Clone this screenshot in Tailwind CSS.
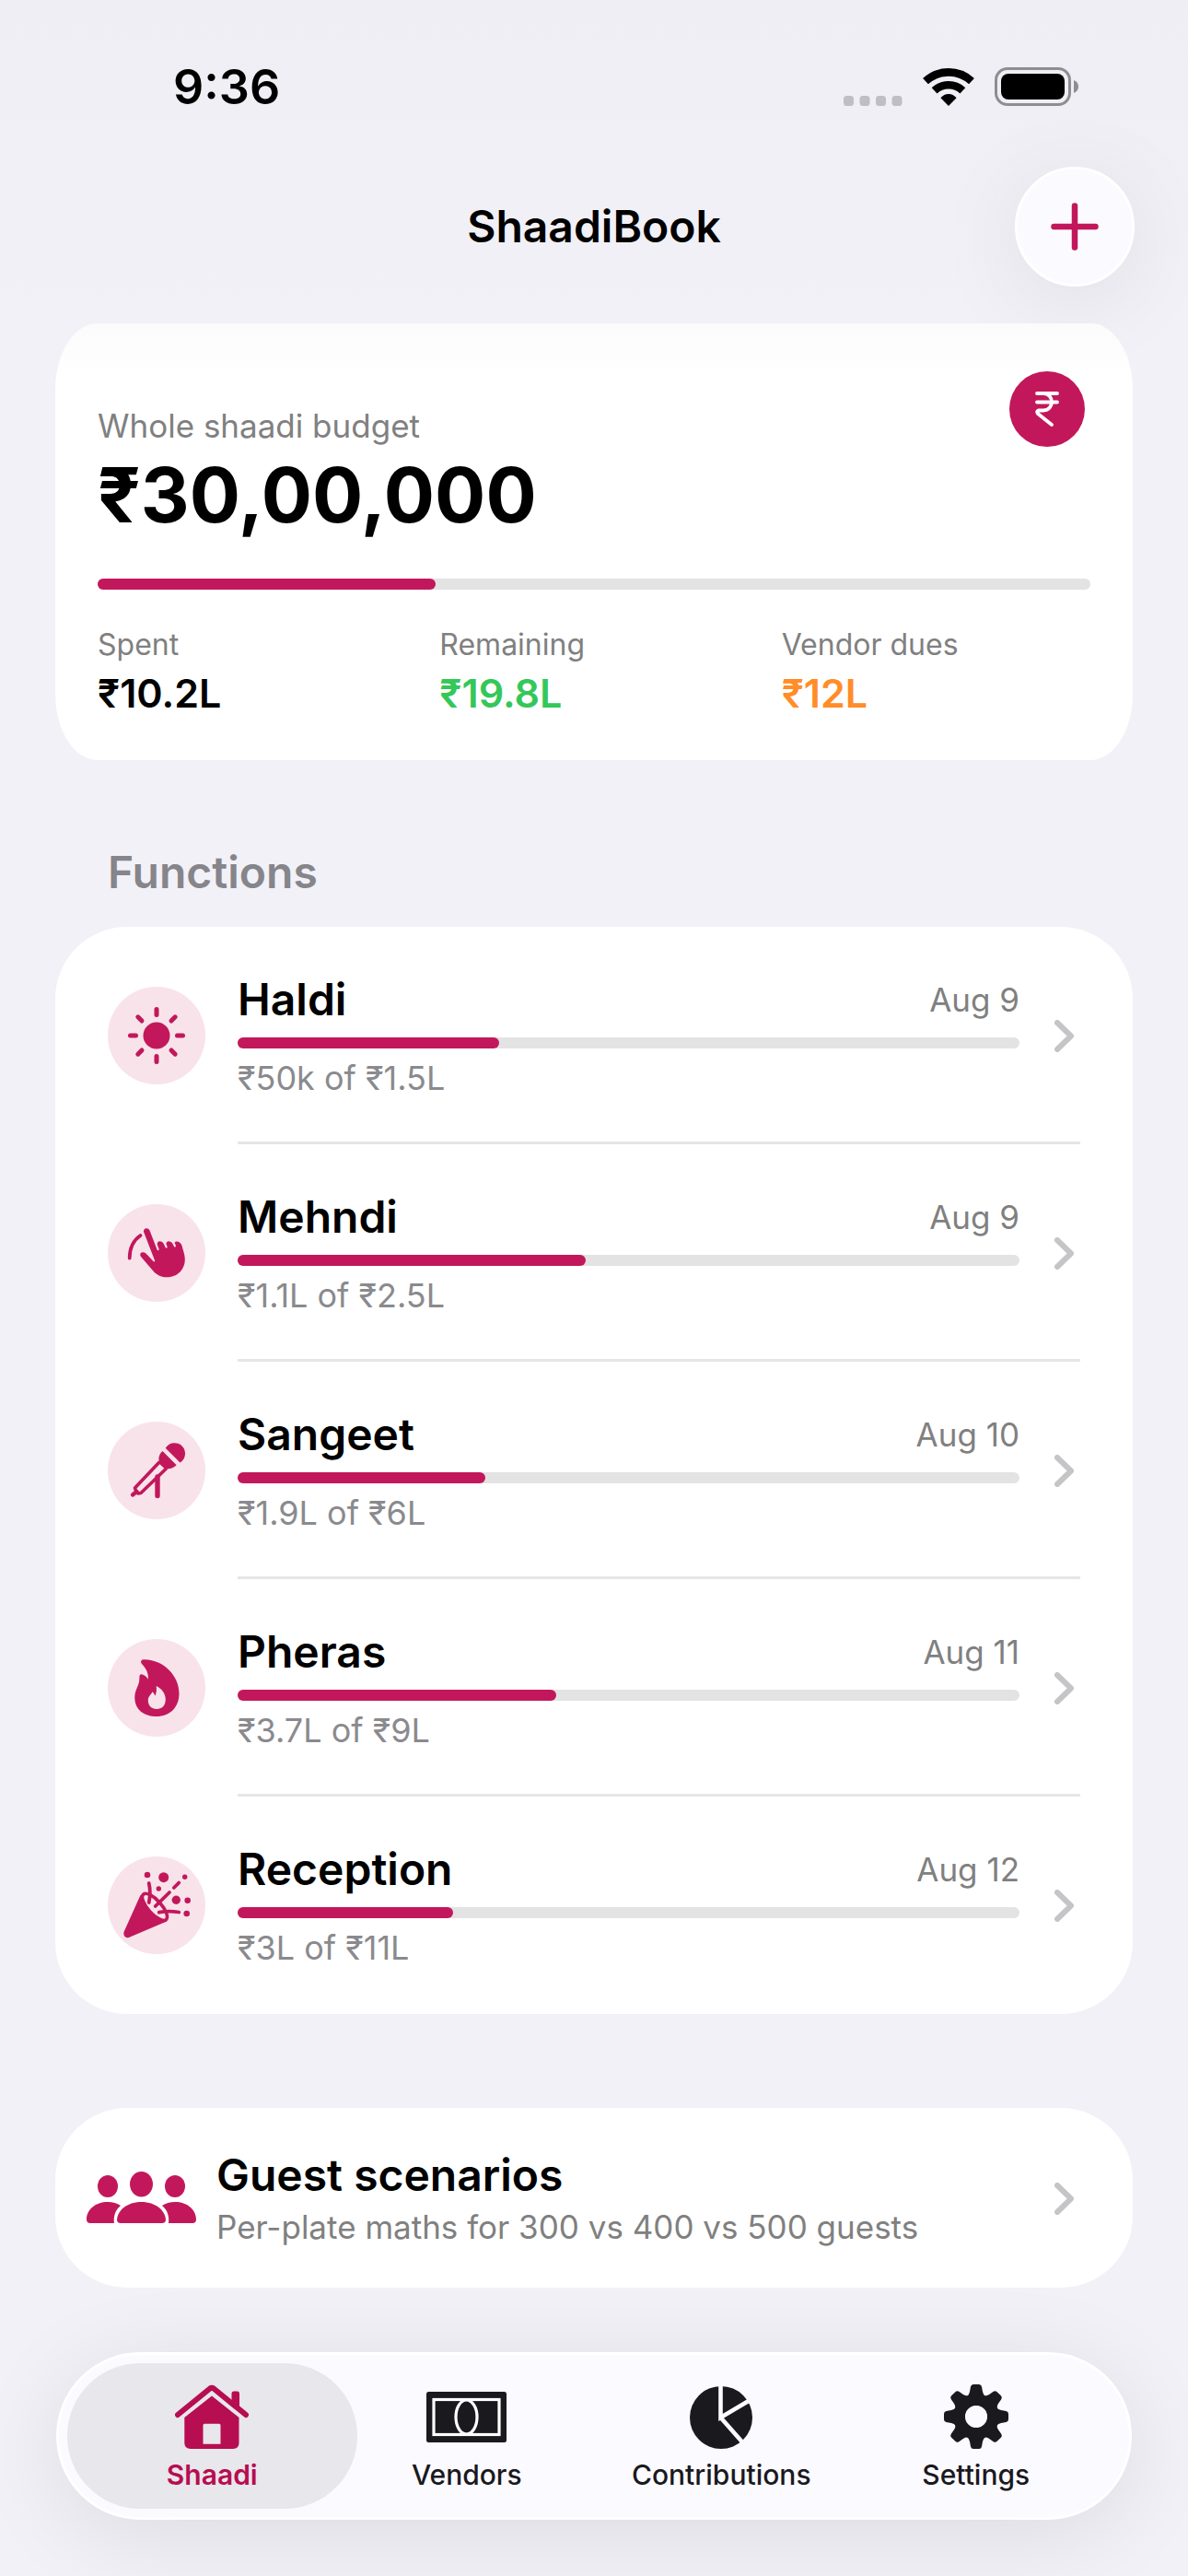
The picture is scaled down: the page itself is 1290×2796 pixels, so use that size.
<!DOCTYPE html>
<html lang="en">
<head>
    <meta charset="UTF-8">
    <meta name="viewport" content="width=device-width, initial-scale=1.0">
    <title>ShaadiBook</title>
    <script src="https://cdn.jsdelivr.net/npm/@tailwindcss/browser@4"></script>
</head>
<body class="bg-[#f2f1f7] font-['Inter','Noto_Sans',sans-serif] text-black">
    <div class="min-h-screen flex flex-col bg-linear-to-b from-[#efeef4] to-[#f2f1f7] to-[360px]">

        <!-- Status bar -->
        <div class="h-[126px] pt-16 pl-[188px] pr-[119px] flex items-center justify-between">
            <span class="text-[52px] leading-[60px] font-semibold">9:36</span>
            <div class="flex items-end gap-[22px] pb-[2px]">
                <svg width="64" height="11" viewBox="0 0 64 11" fill="#bfbec4" aria-hidden="true">
                    <rect width="11" height="11" rx="3.5"/>
                    <rect x="17.5" width="11" height="11" rx="3.5"/>
                    <rect x="35" width="11" height="11" rx="3.5"/>
                    <rect x="52.5" width="11" height="11" rx="3.5"/>
                </svg>
                <svg width="56" height="41" viewBox="0 0 56 41" fill="none" stroke="#000" stroke-width="8.6" aria-hidden="true">
                    <path d="M3 14.2A36.7 36.7 0 0 1 53 14.2"/>
                    <path d="M12.6 24.3A22.7 22.7 0 0 1 43.4 24.3"/>
                    <path d="M28 41L19.4 32.3Q23 28 28 28T36.6 32.3Z" fill="#000" stroke="none"/>
                </svg>
                <svg width="91" height="42" viewBox="0 0 91 42" aria-hidden="true">
                    <rect x="1.5" y="1.5" width="80" height="39" rx="12.5" fill="none" stroke="#8e8e92" stroke-width="3"/>
                    <rect x="7" y="7" width="69" height="28" rx="8" fill="#000"/>
                    <path d="M86 14Q91 16 91 21T86 28Z" fill="#8e8e92"/>
                </svg>
            </div>
        </div>

        <!-- Title bar -->
        <header class="mt-[55px] px-[58px] grid grid-cols-[1fr_auto_1fr] items-center">
            <h1 class="col-start-2 text-[48px] leading-[60px] font-semibold">ShaadiBook</h1>
            <button type="button" aria-label="Add function" class="justify-self-end size-[130px] rounded-full bg-[#fbfaff] border-3 border-white flex items-center justify-center shadow-[0_16px_100px_rgba(0,0,0,0.08)]">
                <svg width="52" height="52" viewBox="0 0 52 52" stroke="#c2185b" stroke-width="6.5" stroke-linecap="round">
                    <path d="M26 3.5V48.5M3.5 26H48.5"/>
                </svg>
            </button>
        </header>

        <main class="px-[60px] pt-10">
            <!-- Budget summary -->
            <section class="rounded-[46px/72px] bg-linear-to-b from-[#fbfbfb] to-white to-[60px] px-[46px] pt-[52px] pb-[45px]">
                <div class="flex justify-between items-start">
                    <div class="pt-[35px]">
                        <p class="text-[35px] leading-[48px] text-[#808080]">Whole shaadi budget</p>
                        <p class="mt-1 text-[82px] leading-[96px] font-bold">₹30,00,000</p>
                    </div>
                    <div class="mr-[6px] size-[82px] rounded-full bg-[#c2185b] flex items-center justify-center">
                        <svg width="26" height="38" viewBox="0 0 26 38" fill="none" stroke="#fff" stroke-width="3.8" stroke-linecap="round" stroke-linejoin="round" aria-hidden="true">
                            <path d="M2 2H24M2 11.5H24M2 2H9C21 2 21 20.5 9 20.5H3.5Q1 21.5 3 24L18 36"/>
                        </svg>
                    </div>
                </div>
                <div class="mt-[42px] h-3 rounded-full bg-[#e3e3e3]" role="progressbar" aria-label="Budget spent" aria-valuenow="34" aria-valuemin="0" aria-valuemax="100">
                    <div class="h-3 rounded-full bg-[#c2185b]" style="width: 34%"></div>
                </div>
                <dl class="mt-10 grid grid-cols-3 gap-9">
                    <div>
                        <dt class="text-[32px] leading-10 text-[#808080]">Spent</dt>
                        <dd class="mt-1 text-[43px] leading-[56px] font-semibold">₹10.2L</dd>
                    </div>
                    <div>
                        <dt class="text-[32px] leading-10 text-[#808080]">Remaining</dt>
                        <dd class="mt-1 text-[43px] leading-[56px] font-semibold text-[#34c759]">₹19.8L</dd>
                    </div>
                    <div>
                        <dt class="text-[32px] leading-10 text-[#808080]">Vendor dues</dt>
                        <dd class="mt-1 text-[43px] leading-[56px] font-semibold text-[#ff8d28]">₹12L</dd>
                    </div>
                </dl>
            </section>

            <!-- Functions -->
            <h2 class="mt-[92px] mb-[29px] pl-[57px] text-[48px] leading-[60px] font-semibold text-[#85858b]">Functions</h2>
            <ul class="rounded-[78px] bg-white">
                <li>
                    <a href="#haldi" class="flex items-center gap-[35px] px-[57px]">
                        <svg class="shrink-0" width="106" height="106" viewBox="0 0 106 106" aria-hidden="true">
                            <circle cx="53" cy="53" r="53" fill="#f8e3eb"/>
                            <circle cx="53" cy="53" r="14.5" fill="#c2185b"/>
                            <g stroke="#c2185b" stroke-width="5" stroke-linecap="round">
                                <path d="M53 24.5V30.5M53 75.5V81.5M24.5 53H30.5M75.5 53H81.5"/>
                                <path d="M32.8 32.8L37 37M69 69L73.2 73.2M73.2 32.8L69 37M37 69L32.8 73.2"/>
                            </g>
                        </svg>
                        <div class="flex-1 flex items-center gap-[38px] pt-[49px] pb-[45px] pr-[7px] border-b-3 border-[#e6e6e6]">
                            <div class="flex-1">
                                <div class="flex items-center justify-between">
                                    <h3 class="text-[48px] leading-[60px] font-semibold">Haldi</h3>
                                    <span class="text-[35px] leading-[48px] text-[#808080]">Aug 9</span>
                                </div>
                                <div class="mt-[11px] h-3 rounded-full bg-[#e3e3e3]">
                                    <div class="h-3 rounded-full bg-[#c2185b]" style="width: 33.4%"></div>
                                </div>
                                <p class="mt-2 text-[36px] leading-[48px] text-[#8a8a8e]">₹50k of ₹1.5L</p>
                            </div>
                            <svg class="shrink-0" width="21" height="35" viewBox="0 0 21 35" fill="none" stroke="#c5c5c7" stroke-width="6" stroke-linecap="round" stroke-linejoin="round" aria-hidden="true">
                                <path d="M3 3L18 17.5L3 32"/>
                            </svg>
                        </div>
                    </a>
                </li>
                <li>
                    <a href="#mehndi" class="flex items-center gap-[35px] px-[57px]">
                        <svg class="shrink-0" width="106" height="106" viewBox="0 0 106 106" aria-hidden="true">
                            <circle cx="53" cy="53" r="53" fill="#f8e3eb"/>
                            <path d="M23.7 58.5C23.7 48 27.5 39.5 35.5 34" fill="none" stroke="#c2185b" stroke-width="3.8" stroke-linecap="round"/>
                            <path fill="#c2185b" d="M39.2 30.6C38 26.5 43.5 24.3 45.6 28.8L53.6 49.5C54.3 51 56 50 55.5 48.5L53.8 44C53 40.5 57.5 38.5 60.5 42.5L62.6 47C63.5 48.5 65 47.5 64.6 46L63.4 43C63.5 39.8 68 38.8 70.5 43L72 46C73 47.3 74.3 46.3 73.8 44.5L72.6 42C74 39.3 79 40.5 80.5 45L83 54C84.5 60 84 66 80.5 71C77 76.5 71 79.3 64 79.3C57 79.3 52 76 48 71L36 57C33.5 53 38 50.5 41.5 53.5L49.5 62C50.5 63 51.5 62.3 51 61Z"/>
                        </svg>
                        <div class="flex-1 flex items-center gap-[38px] pt-[49px] pb-[45px] pr-[7px] border-b-3 border-[#e6e6e6]">
                            <div class="flex-1">
                                <div class="flex items-center justify-between">
                                    <h3 class="text-[48px] leading-[60px] font-semibold">Mehndi</h3>
                                    <span class="text-[35px] leading-[48px] text-[#808080]">Aug 9</span>
                                </div>
                                <div class="mt-[11px] h-3 rounded-full bg-[#e3e3e3]">
                                    <div class="h-3 rounded-full bg-[#c2185b]" style="width: 44.5%"></div>
                                </div>
                                <p class="mt-2 text-[36px] leading-[48px] text-[#8a8a8e]">₹1.1L of ₹2.5L</p>
                            </div>
                            <svg class="shrink-0" width="21" height="35" viewBox="0 0 21 35" fill="none" stroke="#c5c5c7" stroke-width="6" stroke-linecap="round" stroke-linejoin="round" aria-hidden="true">
                                <path d="M3 3L18 17.5L3 32"/>
                            </svg>
                        </div>
                    </a>
                </li>
                <li>
                    <a href="#sangeet" class="flex items-center gap-[35px] px-[57px]">
                        <svg class="shrink-0" width="106" height="106" viewBox="0 0 106 106" aria-hidden="true">
                            <circle cx="53" cy="53" r="53" fill="#f8e3eb"/>
                            <g fill="#c2185b">
                                <path d="M62.7 28.7A11.5 11.5 0 1 1 78.5 44.5Z"/>
                                <path d="M59.5 32L74.7 47.3C71 51 66 52 63.5 51L56 43.5C54.5 40 56 35 59.5 32Z"/>
                            </g>
                            <path d="M56.5 43.5L29.5 72L30.5 75L33 78L36 77.5L64 50.5" fill="none" stroke="#c2185b" stroke-width="3.6" stroke-linejoin="round"/>
                            <path d="M56.5 43.5L64 50.5" stroke="#c2185b" stroke-width="4"/>
                            <path d="M31.5 76L27 79.5" stroke="#c2185b" stroke-width="4.4" stroke-linecap="round"/>
                            <path d="M54 60V80.5" stroke="#c2185b" stroke-width="5.4" stroke-linecap="round"/>
                        </svg>
                        <div class="flex-1 flex items-center gap-[38px] pt-[49px] pb-[45px] pr-[7px] border-b-3 border-[#e6e6e6]">
                            <div class="flex-1">
                                <div class="flex items-center justify-between">
                                    <h3 class="text-[48px] leading-[60px] font-semibold">Sangeet</h3>
                                    <span class="text-[35px] leading-[48px] text-[#808080]">Aug 10</span>
                                </div>
                                <div class="mt-[11px] h-3 rounded-full bg-[#e3e3e3]">
                                    <div class="h-3 rounded-full bg-[#c2185b]" style="width: 31.7%"></div>
                                </div>
                                <p class="mt-2 text-[36px] leading-[48px] text-[#8a8a8e]">₹1.9L of ₹6L</p>
                            </div>
                            <svg class="shrink-0" width="21" height="35" viewBox="0 0 21 35" fill="none" stroke="#c5c5c7" stroke-width="6" stroke-linecap="round" stroke-linejoin="round" aria-hidden="true">
                                <path d="M3 3L18 17.5L3 32"/>
                            </svg>
                        </div>
                    </a>
                </li>
                <li>
                    <a href="#pheras" class="flex items-center gap-[35px] px-[57px]">
                        <svg class="shrink-0" width="106" height="106" viewBox="0 0 106 106" aria-hidden="true">
                            <circle cx="53" cy="53" r="53" fill="#f8e3eb"/>
                            <path fill="#c2185b" d="M37 27C35 24 36.5 22.2 40 22.2C61 22.5 77.5 40 77.5 59C77.5 74 67.5 84 53 84C38.5 84 29.3 76 29.3 63.5C29.3 54 34.7 51 34.4 42C34.2 38 36 37.5 39 39C41 40 42.7 41.7 43.8 43.8C44.5 37.5 42 32.5 37 27Z"/>
                            <path fill="#f8e3eb" d="M52.7 51C59 54 62.8 59.5 62.8 65.5C62.8 72 59 76 53 76C47.5 76 43.8 72.3 43.8 66.5C43.8 62.5 46.5 61 48.6 57.3C49.8 58.4 50.8 60 51.4 61.8C53 58.5 53.2 55 52.7 51Z"/>
                        </svg>
                        <div class="flex-1 flex items-center gap-[38px] pt-[49px] pb-[45px] pr-[7px] border-b-3 border-[#e6e6e6]">
                            <div class="flex-1">
                                <div class="flex items-center justify-between">
                                    <h3 class="text-[48px] leading-[60px] font-semibold">Pheras</h3>
                                    <span class="text-[35px] leading-[48px] text-[#808080]">Aug 11</span>
                                </div>
                                <div class="mt-[11px] h-3 rounded-full bg-[#e3e3e3]">
                                    <div class="h-3 rounded-full bg-[#c2185b]" style="width: 40.7%"></div>
                                </div>
                                <p class="mt-2 text-[36px] leading-[48px] text-[#8a8a8e]">₹3.7L of ₹9L</p>
                            </div>
                            <svg class="shrink-0" width="21" height="35" viewBox="0 0 21 35" fill="none" stroke="#c5c5c7" stroke-width="6" stroke-linecap="round" stroke-linejoin="round" aria-hidden="true">
                                <path d="M3 3L18 17.5L3 32"/>
                            </svg>
                        </div>
                    </a>
                </li>
                <li>
                    <a href="#reception" class="flex items-center gap-[35px] px-[57px]">
                        <svg class="shrink-0" width="106" height="106" viewBox="0 0 106 106" aria-hidden="true">
                            <circle cx="53" cy="53" r="53" fill="#f8e3eb"/>
                            <path fill="#c2185b" d="M35.5 42L17.5 82C16.5 86.5 20 89.5 24 87.5L64 70.5Z"/>
                            <ellipse cx="51" cy="54.8" rx="18.5" ry="7.2" transform="rotate(48 51 54.8)" fill="#f8e3eb" stroke="#c2185b" stroke-width="3.6"/>
                            <g fill="none" stroke="#c2185b" stroke-width="3.8" stroke-linecap="round">
                                <path d="M44.7 29Q47 39 44.7 50"/>
                                <path d="M77.3 28.5L71.8 34M67 39L51.7 54"/>
                                <path d="M77.3 60.5Q66 58.5 55.7 60.7"/>
                            </g>
                            <g fill="#c2185b">
                                <circle cx="43" cy="20" r="3.3"/>
                                <circle cx="60.7" cy="22.7" r="5.5"/>
                                <circle cx="83.7" cy="22.3" r="2.7"/>
                                <circle cx="55.3" cy="35" r="2.7"/>
                                <circle cx="74.3" cy="47.3" r="4.7"/>
                                <circle cx="86.7" cy="47.7" r="3.3"/>
                                <circle cx="85.7" cy="62" r="3.3"/>
                            </g>
                        </svg>
                        <div class="flex-1 flex items-center gap-[38px] pt-[49px] pb-[45px] pr-[7px] border-b-3 border-transparent">
                            <div class="flex-1">
                                <div class="flex items-center justify-between">
                                    <h3 class="text-[48px] leading-[60px] font-semibold">Reception</h3>
                                    <span class="text-[35px] leading-[48px] text-[#808080]">Aug 12</span>
                                </div>
                                <div class="mt-[11px] h-3 rounded-full bg-[#e3e3e3]">
                                    <div class="h-3 rounded-full bg-[#c2185b]" style="width: 27.6%"></div>
                                </div>
                                <p class="mt-2 text-[36px] leading-[48px] text-[#8a8a8e]">₹3L of ₹11L</p>
                            </div>
                            <svg class="shrink-0" width="21" height="35" viewBox="0 0 21 35" fill="none" stroke="#c5c5c7" stroke-width="6" stroke-linecap="round" stroke-linejoin="round" aria-hidden="true">
                                <path d="M3 3L18 17.5L3 32"/>
                            </svg>
                        </div>
                    </a>
                </li>
            </ul>

            <!-- Guest scenarios -->
            <a href="#guests" class="mt-[102px] rounded-[78px] bg-white flex items-center gap-[22px] pl-[34px] pr-[64px] pt-[43px] pb-[42px]">
                <svg class="shrink-0" width="119" height="58" viewBox="0 0 119 58" fill="#c2185b" aria-hidden="true">
                    <ellipse cx="59.5" cy="13.7" rx="12.5" ry="13.7"/>
                    <ellipse cx="23" cy="16" rx="11" ry="12"/>
                    <ellipse cx="96" cy="16" rx="11" ry="12"/>
                    <path d="M33 52C34 42 44 33 59.5 33S85 42 86 52Q86 56 82 56H37Q33 56 33 52Z"/>
                    <path d="M0 52C0 41 10 33 23 33Q31 33 37 37C31 42 29 49 30 56H4Q0 56 0 52Z"/>
                    <path d="M119 52C119 41 109 33 96 33Q88 33 82 37C88 42 90 49 89 56H115Q119 56 119 52Z"/>
                </svg>
                <div class="flex-1">
                    <h3 class="text-[48px] leading-[60px] font-semibold">Guest scenarios</h3>
                    <p class="mt-[2px] text-[35px] leading-[48px] text-[#808080]">Per-plate maths for 300 vs 400 vs 500 guests</p>
                </div>
                <svg class="shrink-0" width="21" height="35" viewBox="0 0 21 35" fill="none" stroke="#c5c5c7" stroke-width="6" stroke-linecap="round" stroke-linejoin="round" aria-hidden="true">
                    <path d="M3 3L18 17.5L3 32"/>
                </svg>
            </a>
        </main>

        <!-- Tab bar -->
        <div class="mt-auto pt-[70px] pb-[61px] px-[61px]">
            <nav class="grid grid-cols-4 rounded-full bg-[#fbfaff] border-3 border-white py-[9px] px-7 text-[30px] leading-9 font-medium text-[#1a191e] shadow-[0_16px_100px_rgba(0,0,0,0.09)]">
                <a href="#shaadi" aria-current="page" class="-mx-[19px] rounded-full bg-[#e8e7eb] pt-[23px] pb-[19px] flex flex-col items-center gap-[10px] font-semibold text-[#b70d51]">
                    <svg width="80" height="70" viewBox="0 0 80 70" fill="#b70d51" aria-hidden="true">
                        <path d="M3 33L38 4.5Q40 3 42 4.5L77 33" fill="none" stroke="#b70d51" stroke-width="6" stroke-linecap="round" stroke-linejoin="round"/>
                        <path d="M61.5 20V10Q61.5 7.5 64 7.5H68Q70 7.5 70 10V28Z"/>
                        <path fill-rule="evenodd" d="M40 12.5L69.5 36V63.5Q69.5 70 63 70H17Q10.3 70 10.3 63.5V36ZM32 42.7Q30.5 42.7 30.5 44.5V64.7H49.5V44.5Q49.5 42.7 48 42.7Z"/>
                    </svg>
                    Shaadi
                </a>
                <a href="#vendors" class="pt-[23px] pb-[19px] flex flex-col items-center gap-[10px]">
                    <svg width="87" height="70" viewBox="0 0 87 70" aria-hidden="true">
                        <rect y="8" width="87" height="55" rx="2.5" fill="#1a191e"/>
                        <g fill="none" stroke="#fff" stroke-width="3.2">
                            <rect x="8" y="16.5" width="71" height="38"/>
                            <ellipse cx="43.5" cy="35.5" rx="11.5" ry="18.5"/>
                        </g>
                    </svg>
                    Vendors
                </a>
                <a href="#contributions" class="pt-[23px] pb-[19px] flex flex-col items-center gap-[10px]">
                    <svg width="68" height="70" viewBox="0 0 68 70" aria-hidden="true">
                        <circle cx="34" cy="36" r="34" fill="#1a191e"/>
                        <path d="M33.5 0V36L68 15.5M33.5 36L60 66" fill="none" stroke="#fbfaff" stroke-width="4.6"/>
                    </svg>
                    Contributions
                </a>
                <a href="#settings" class="pt-[23px] pb-[19px] flex flex-col items-center gap-[10px]">
                    <svg width="70" height="70" viewBox="-35 -35 70 70" fill="#1a191e" aria-hidden="true">
                        <defs>
                            <path id="tooth" d="M-10 -22Q-7.5 -24 -7 -27L-6 -32.5Q-5.5 -35 -3 -35H3Q5.5 -35 6 -32.5L7 -27Q7.5 -24 10 -22L0 -10Z"/>
                        </defs>
                        <use href="#tooth"/>
                        <use href="#tooth" transform="rotate(45)"/>
                        <use href="#tooth" transform="rotate(90)"/>
                        <use href="#tooth" transform="rotate(135)"/>
                        <use href="#tooth" transform="rotate(180)"/>
                        <use href="#tooth" transform="rotate(225)"/>
                        <use href="#tooth" transform="rotate(270)"/>
                        <use href="#tooth" transform="rotate(315)"/>
                        <circle r="18" fill="none" stroke="#1a191e" stroke-width="12.5"/>
                        <circle r="12" fill="#fbfaff"/>
                    </svg>
                    Settings
                </a>
            </nav>
        </div>
    </div>
</body>
</html>
